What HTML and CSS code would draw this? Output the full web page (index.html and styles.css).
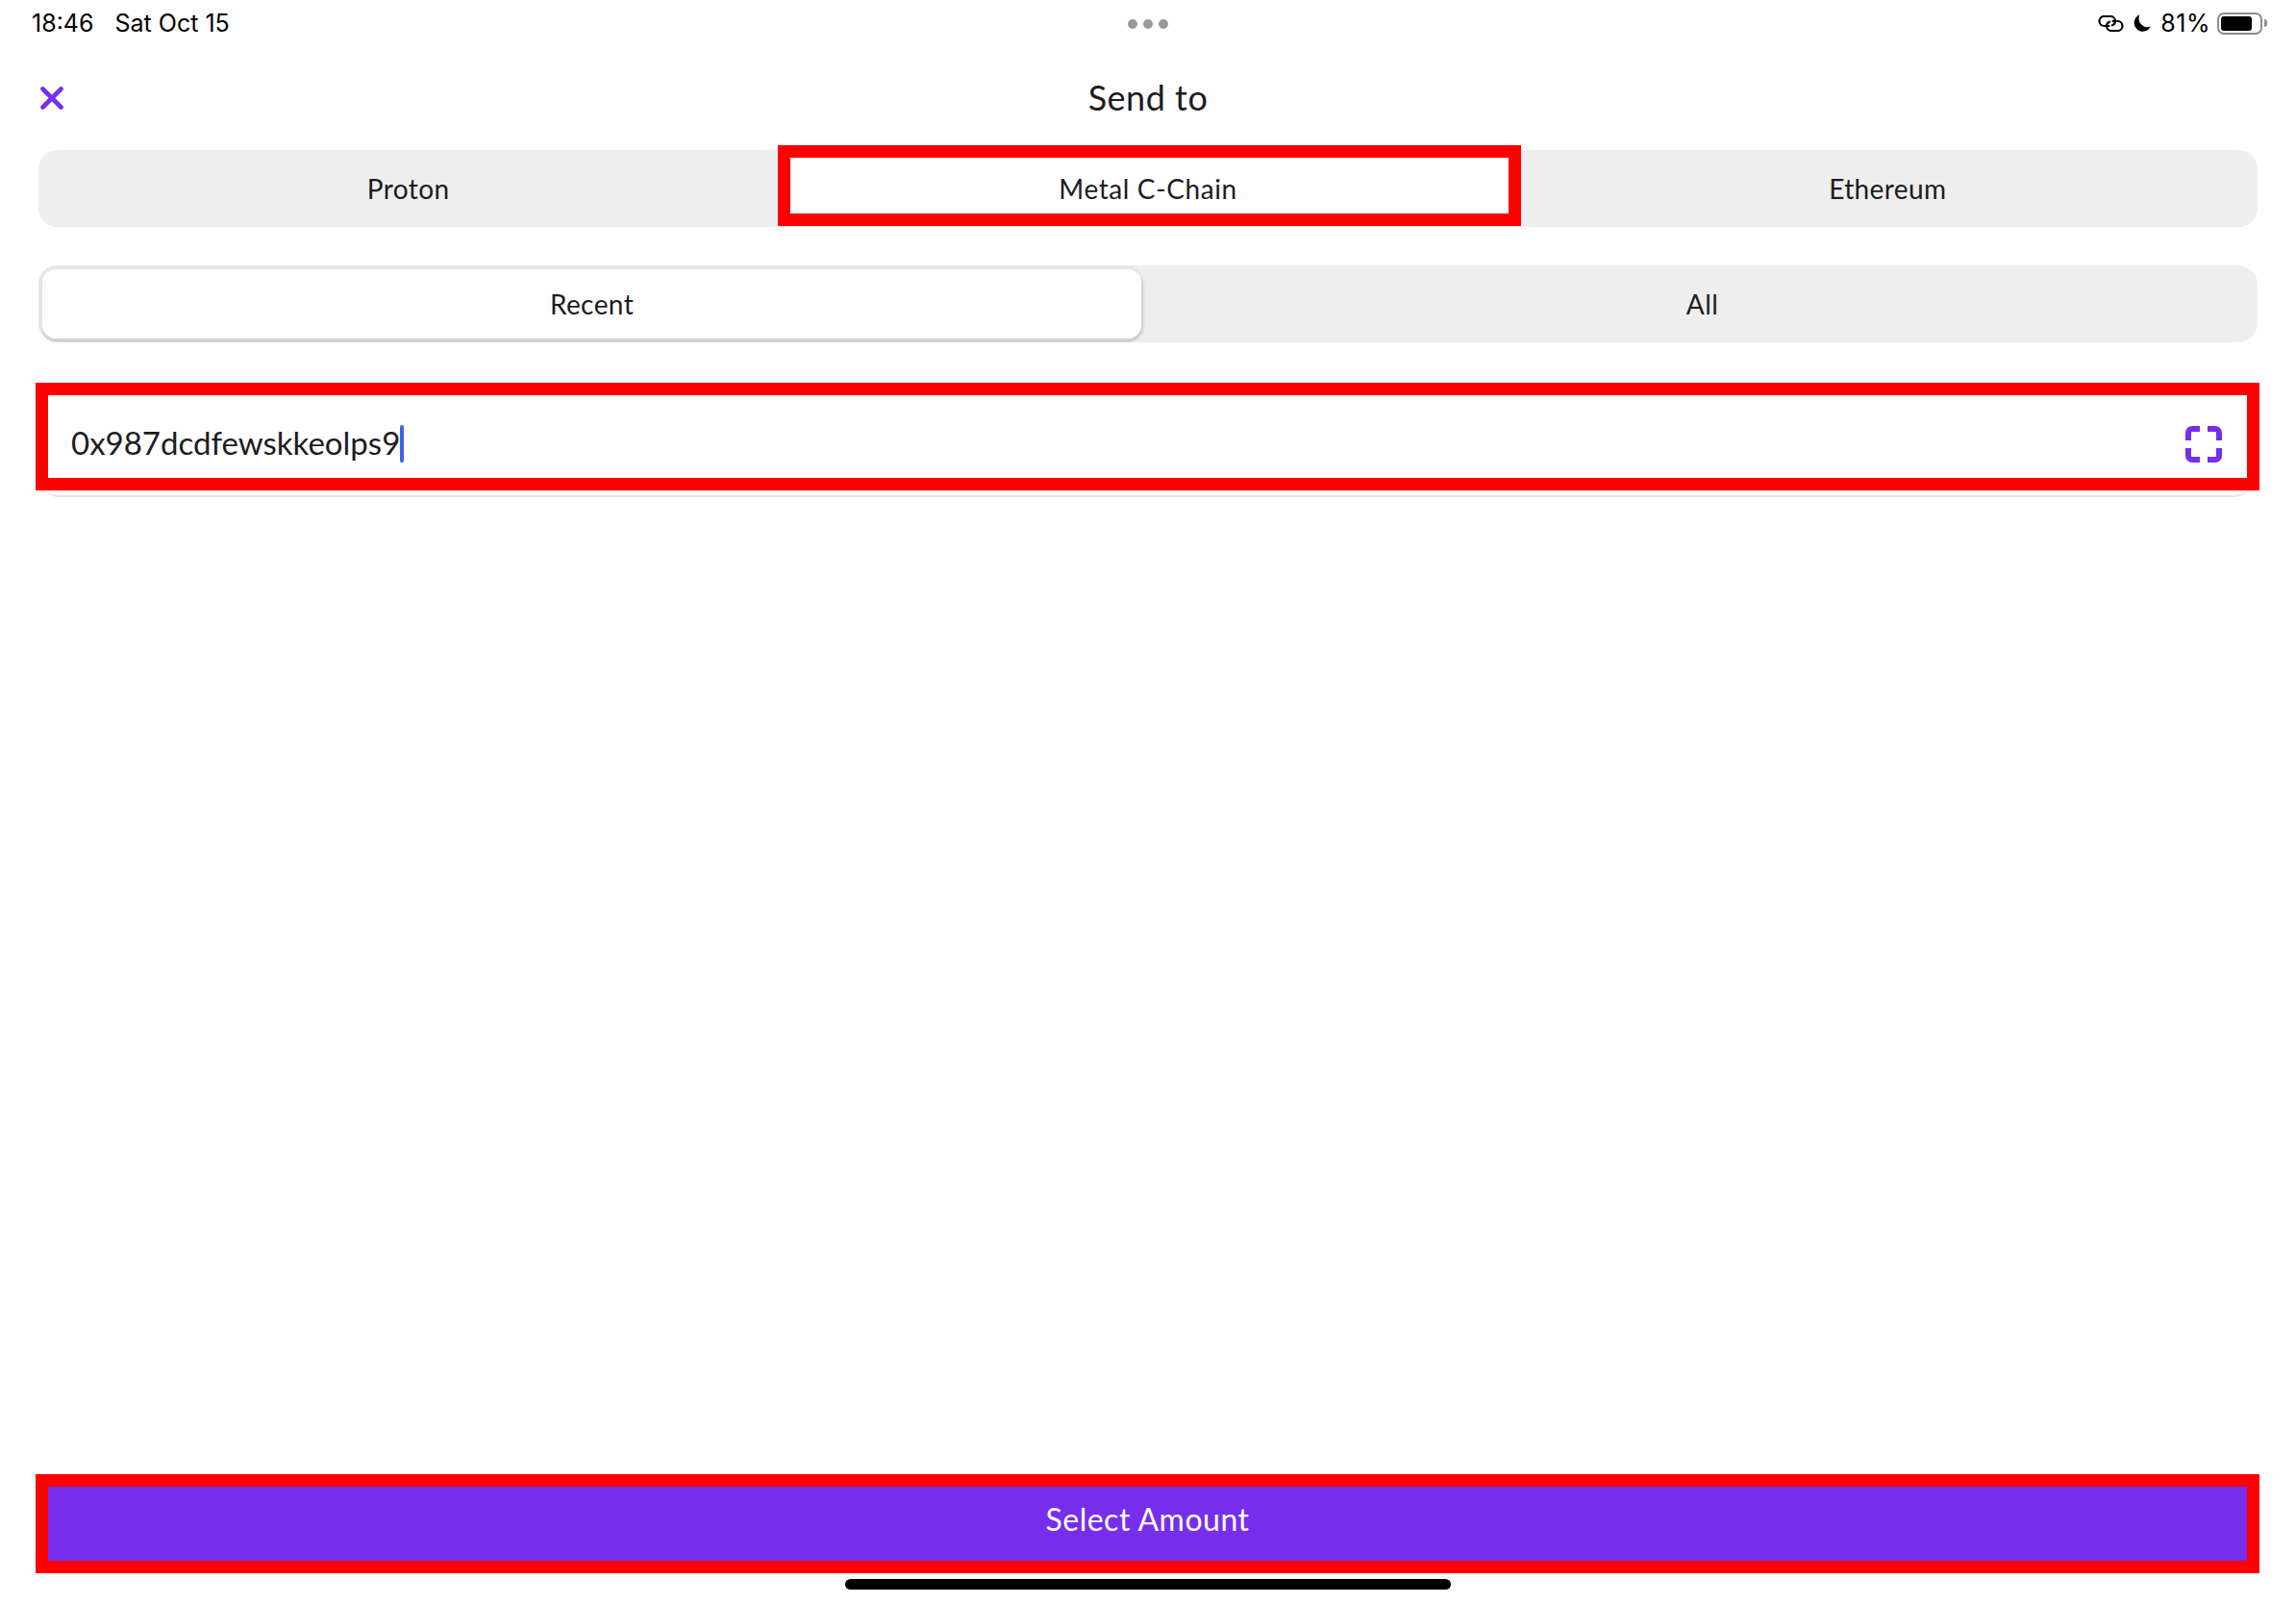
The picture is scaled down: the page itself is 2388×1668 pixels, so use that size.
FILE: index.html
```html
<!DOCTYPE html>
<html lang="en">
<head>
<meta charset="utf-8">
<title>Send to</title>
<link rel="stylesheet" href="styles.css">
</head>
<body>
<div class="page">
  <div class="status">
    <div class="status-left"><span class="time">18:46</span><span class="date">Sat Oct 15</span></div>
    <div class="dots"><i></i><i></i><i></i></div>
    <div class="status-right">
      <svg class="link" viewBox="0 0 27 17" width="27" height="17"><g fill="none" stroke="#000" stroke-width="2.200" stroke-linecap="round"><path d="M11.500 11H6.500a5 5 0 0 1 0-10H13a5 5 0 0 1 5 5 4.500 4.500 0 0 1-3 4.300"/><path d="M15.500 6H20.500a5 5 0 0 1 0 10H14a5 5 0 0 1-5-5 4.500 4.500 0 0 1 3-4.300"/></g></svg>
      <svg class="moon" viewBox="0 0 18 18" width="18" height="18"><path d="M6.500 0.300A9 9 0 1 0 17.800 12.600 9 9 0 0 1 6.500 0.300Z" fill="#000"/></svg>
      <span class="pct">81%</span>
      <div class="battery"><div class="battery-fill"></div></div>
      <div class="nub"></div>
    </div>
  </div>
  <div class="header">
    <svg class="close" viewBox="0 0 24 24" width="24" height="24"><path d="M2.500 2.500 21.500 21.500M21.500 2.500 2.500 21.500" stroke="#762eec" stroke-width="4.600" stroke-linecap="round" fill="none"/></svg>
    <h1 class="title">Send to</h1>
  </div>
  <div class="tabs">
    <div class="tab">Proton</div>
    <div class="tab tab-active">Metal C-Chain</div>
    <div class="tab">Ethereum</div>
  </div>
  <div class="segment">
    <div class="seg seg-active">Recent</div>
    <div class="seg seg-other">All</div>
  </div>
  <div class="card">
    <div class="field">
      <span class="address">0x987dcdfewskkeolps9</span><span class="caret"></span>
      <svg class="scan" viewBox="0 0 38 38" width="38" height="38"><path d="M3 15V7a4 4 0 0 1 4-4h8M23 3h8a4 4 0 0 1 4 4v8M35 23v8a4 4 0 0 1-4 4h-8M15 35H7a4 4 0 0 1-4-4v-8" fill="none" stroke="#762eec" stroke-width="6"/></svg>
    </div>
  </div>
  <div class="spacer"></div>
  <div class="button">Select Amount</div>
  <div class="home"></div>
</div>
</body>
</html>
```

FILE: styles.css
```css
* { box-sizing: border-box; }
html, body { margin: 0; padding: 0; background: #fefefe; }
body { font-family: Lato, "Liberation Sans", sans-serif; color: #1c1c1e; }
.page { width: 2388px; height: 1668px; display: flex; flex-direction: column; overflow: hidden; }

.status { height: 48px; display: grid; grid-template-columns: 1fr auto 1fr; align-items: center; padding: 0 30px; font-family: Inter, sans-serif; font-size: 25px; color: #000; }
.status-left { display: flex; gap: 22px; padding-left: 3px; }
.dots { display: flex; gap: 6px; margin-top: 2px; }
.dots i { width: 10px; height: 10px; border-radius: 50%; background: #9a9a9a; }
.status-right { display: flex; align-items: center; justify-content: flex-end; }
.link { margin-right: 10px; }
.moon { margin-right: 10px; }
.pct { margin-right: 7px; letter-spacing: 0.5px; }
.battery { width: 47px; height: 23px; border: 2px solid #8e8e8e; border-radius: 7px; padding: 2px; }
.battery-fill { width: 32px; height: 15px; background: #000; border-radius: 3px; }
.nub { width: 3px; height: 8px; margin-left: 2px; background: #8e8e8e; border-radius: 0 3px 3px 0; }

.header { height: 108px; display: grid; grid-template-columns: 1fr auto 1fr; align-items: center; padding: 0 42px; }
.close { grid-column: 1; grid-row: 1; }
.title { grid-column: 2; grid-row: 1; margin: 0 0 3px; font-size: 36px; font-weight: 400; letter-spacing: 0.5px; }

.tabs { margin: 0 40px; height: 80px; background: #eee; border-radius: 20px; display: grid; grid-template-columns: repeat(3, 1fr); font-size: 28px; letter-spacing: 0.4px; }
.tab { display: flex; align-items: center; justify-content: center; }
.tab-active { background: #fff; outline: 13px solid #f00; margin: 8px 9.67px 14px 12.67px; padding: 6px 3px 0 0; letter-spacing: 0.6px; }

.segment { margin: 40px 40px 0; height: 80px; padding: 4px; background: #eee; border-radius: 20px; overflow: hidden; display: grid; grid-template-columns: 1fr 1fr; font-size: 28px; letter-spacing: 0.4px; }
.seg { display: flex; align-items: center; justify-content: center; }
.seg-other { padding-left: 3px; }
.seg-active { background: #fefefe; border-radius: 14px; margin-right: 7px; box-shadow: 0 4px 0 0 #d2d2d2, -4px -4px 0 0 #e6e6e6, -4px 0 0 0 #e6e6e6, 0 -4px 0 0 #e6e6e6, 2px 2px 3px rgba(0,0,0,.15); }

.card { margin: 42px 43px 0 40px; height: 119px; padding: 13px 8px 20px 10px; border-bottom: 2px solid #e4e4e4; border-radius: 0 0 22px 22px; }
.field { height: 86px; outline: 13px solid #f00; background: #fefefe; display: flex; align-items: center; padding: 12px 26px 0 24px; }
.address { font-size: 33px; }
.caret { width: 4px; height: 39px; margin-top: 2px; background: #3f63e8; border-radius: 2px; }
.scan { margin: 3px 0 0 auto; }

.spacer { flex: 1; }
.button { margin: 0 51px 0 50px; height: 77px; padding-bottom: 10px; background: #762eec; outline: 13px solid #f00; color: #fff; font-size: 32px; letter-spacing: 0.5px; display: flex; align-items: center; justify-content: center; }
.home { align-self: center; width: 630px; height: 11px; margin: 19px 0 15px; background: #000; border-radius: 6px; }
```
